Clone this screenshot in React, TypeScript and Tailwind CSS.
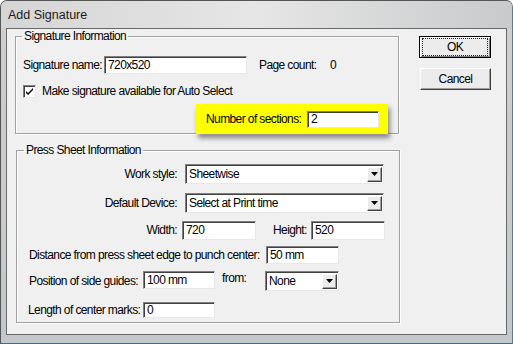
import React from "react";

const font = { fontFamily: "'Liberation Sans', Arial, sans-serif" };

function Field({ value, className }: { value: string; className: string }) {
  return (
    <div
      className={`flex items-center bg-white pl-[3px] border border-t-[#808080] border-l-[#808080] border-r-[#e8e8e8] border-b-[#e8e8e8] shadow-[inset_1px_1px_0_#404040] ${className}`}
    >
      {value}
    </div>
  );
}

function DropArrow() {
  return (
    <div className="ml-auto mr-[1px] flex h-[15px] w-[15px] items-center justify-center bg-[#ececec] border border-t-white border-l-white border-r-[#404040] border-b-[#404040] shadow-[inset_-1px_-1px_0_#a0a0a0]">
      <svg width="7" height="4" viewBox="0 0 7 4">
        <path d="M0 0h7L3.5 4z" fill="#000" />
      </svg>
    </div>
  );
}

function Select({ value, className }: { value: string; className: string }) {
  return (
    <div
      className={`flex items-center bg-white pl-[3px] border border-t-[#808080] border-l-[#808080] border-r-[#e8e8e8] border-b-[#e8e8e8] shadow-[inset_1px_1px_0_#404040] ${className}`}
    >
      <span>{value}</span>
      <DropArrow />
    </div>
  );
}

export default function App() {
  return (
    <div
      style={font}
      className="relative h-[344px] w-[513px] overflow-hidden whitespace-nowrap rounded-t-[7px] border border-[#555] border-r-[#4f8298] border-b-[#3f6d82] bg-gradient-to-b from-[#cfcfcf] to-[#c4c8ca] text-[12px] leading-[15px] tracking-[-0.6px] text-black"
    >
      {/* Title bar */}
      <div className="flex h-[27px] items-center bg-gradient-to-r from-[#d5d5d5] via-[#e6e6e6] to-[#c8cacb] pl-[7px] pt-[1px] text-[12.5px] tracking-normal text-[#1a1a1a]">
        Add Signature
      </div>

      {/* Client area */}
      <div className="ml-[5px] flex h-[307px] w-[501px] border border-[#6a6a6a] bg-[#f0f0f0]">
        <div className="w-[393px] pl-[8px]">
          {/* Signature Information */}
          <fieldset className="h-[105px] w-[384px] border border-[#a0a0a0] shadow-[inset_1px_1px_0_#fff,1px_1px_0_#fff]">
            <legend className="ml-[6px] px-[2px]">Signature Information</legend>
            <div className="mt-[12px] flex h-[18px] items-center pl-[7px]">
              <span className="w-[81px]">Signature name:</span>
              <Field value="720x520" className="h-[18px] w-[143px]" />
              <span className="ml-[12px] w-[71px]">Page count:</span>
              <span>0</span>
            </div>
            <div className="mt-[10px] flex h-[15px] items-center pl-[7px]">
              <div className="flex h-[13px] w-[13px] items-center justify-center bg-white border border-t-[#808080] border-l-[#808080] border-r-[#e8e8e8] border-b-[#e8e8e8] shadow-[inset_1px_1px_0_#404040]">
                <svg width="9" height="9" viewBox="0 0 9 9">
                  <path d="M1 4l2 2 5-5v2L3 8 1 6z" fill="#000" />
                </svg>
              </div>
              <span className="ml-[6px]">Make signature available for Auto Select</span>
            </div>
            <div className="relative z-10 ml-[180px] mt-[5px] flex h-[30px] w-[192px] items-center bg-[#ffff00] pl-[10px] shadow-[2px_4px_5px_rgba(0,0,0,0.45)]">
              <span className="w-[101px]">Number of sections:</span>
              <Field value="2" className="h-[17px] w-[72px] bg-[#ffff00]" />
            </div>
          </fieldset>

          {/* Press Sheet Information */}
          <fieldset className="ml-[1px] mt-[9px] h-[180px] w-[384px] border border-[#a0a0a0] shadow-[inset_1px_1px_0_#fff,1px_1px_0_#fff]">
            <legend className="ml-[7px] px-[2px]">Press Sheet Information</legend>
            <div className="mt-[6px] flex h-[20px] items-center">
              <span className="w-[160px] text-right">Work style:</span>
              <Select value="Sheetwise" className="ml-[8px] h-[20px] w-[199px]" />
            </div>
            <div className="mt-[9px] flex h-[20px] items-center">
              <span className="w-[160px] text-right">Default Device:</span>
              <Select value="Select at Print time" className="ml-[8px] h-[20px] w-[199px]" />
            </div>
            <div className="mt-[8px] flex h-[19px] items-center">
              <span className="w-[160px] text-right">Width:</span>
              <Field value="720" className="ml-[5px] h-[19px] w-[74px]" />
              <span className="ml-[17px] w-[38px]">Height:</span>
              <Field value="520" className="h-[19px] w-[74px]" />
            </div>
            <div className="mt-[6px] flex h-[18px] items-center pl-[12px]">
              <span className="w-[237px]">Distance from press sheet edge to punch center:</span>
              <Field value="50 mm" className="h-[18px] w-[73px]" />
            </div>
            <div className="mt-[7px] flex h-[20px] items-center pl-[12px]">
              <span className="w-[114px]">Position of side guides:</span>
              <Field value="100 mm" className="h-[18px] w-[72px] self-start" />
              <span className="ml-[7px] -mt-[6px] w-[43px]">from:</span>
              <Select value="None" className="h-[20px] w-[74px]" />
            </div>
            <div className="mt-[11px] flex h-[16px] items-center pl-[11px]">
              <span className="w-[115px]">Length of center marks:</span>
              <Field value="0" className="h-[16px] w-[72px]" />
            </div>
          </fieldset>
        </div>

        {/* Buttons */}
        <div className="ml-[19px] pt-[7px]">
          <button className="flex h-[22px] w-[72px] items-center justify-center border border-black bg-[#ececec] shadow-[inset_1px_1px_0_#fff,inset_-1px_-1px_0_#808080]">
            <span className="flex h-[16px] w-[64px] items-center justify-center outline outline-1 outline-dotted outline-[#222]">OK</span>
          </button>
          <button className="ml-[1px] mt-[10px] flex h-[22px] w-[71px] items-center justify-center border border-t-white border-l-white border-r-[#404040] border-b-[#404040] bg-[#ececec] shadow-[inset_-1px_-1px_0_#a0a0a0]">
            Cancel
          </button>
        </div>
      </div>
    </div>
  );
}
